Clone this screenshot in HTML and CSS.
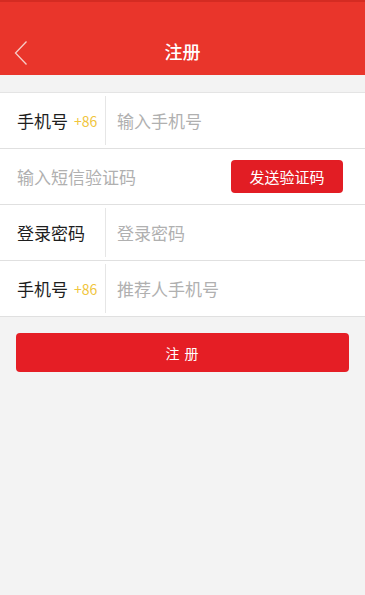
FILE: index.html
```html
<!DOCTYPE html>
<html lang="zh-CN">
<head>
<meta charset="utf-8">
<title>注册</title>
<link rel="stylesheet" href="styles.css">
</head>
<body>
<div class="page">
  <header class="topbar">
    <div class="back">
      <svg width="14" height="26" viewBox="0 0 14 26"><path d="M12.5 1.5 L1.5 13 L12.5 24.5" fill="none" stroke="#f7cdc8" stroke-width="1.3"/></svg>
    </div>
    <h1 class="title">注册</h1>
  </header>
  <div class="form">
    <div class="row">
      <div class="label">手机号<span class="code">+86</span></div>
      <div class="input">输入手机号</div>
    </div>
    <div class="row sms">
      <div class="input">输入短信验证码</div>
      <button class="send">发送验证码</button>
    </div>
    <div class="row">
      <div class="label">登录密码</div>
      <div class="input">登录密码</div>
    </div>
    <div class="row">
      <div class="label">手机号<span class="code">+86</span></div>
      <div class="input">推荐人手机号</div>
    </div>
  </div>
  <div class="actions">
    <button class="submit">注 册</button>
  </div>
</div>
</body>
</html>
```
FILE: styles.css
```css
* { box-sizing: border-box; }
html, body { margin: 0; padding: 0; }
body {
  background: #f3f3f3;
  font-family: "Noto Sans CJK SC", "Noto Sans", sans-serif;
  width: 365px;
  height: 595px;
  overflow: hidden;
}
.topbar {
  height: 75px;
  background: #e9352b;
  border-top: 2px solid #d42b22;
  display: flex;
  align-items: center;
  justify-content: center;
  position: relative;
  padding-top: 24px;
}
.back {
  position: absolute;
  left: 14px;
  top: 38px;
  width: 14px;
  height: 26px;
}
.back svg { display: block; }
.title {
  margin: 0;
  color: #fff;
  font-size: 18px;
  font-weight: 500;
  line-height: 24px;
}
.form {
  margin-top: 17px;
  background: #fff;
  border-top: 1px solid #e4e4e4;
}
.row {
  height: 56px;
  display: flex;
  align-items: center;
  border-bottom: 1px solid #e0e0e0;
}
.label {
  width: 106px;
  padding-left: 17px;
  font-size: 17px;
  color: #1e1e1e;
  align-self: stretch;
  display: flex;
  align-items: center;
  border-right: 1px solid #e6e6e6;
  margin: 3px 0;
  white-space: nowrap;
}
.code {
  color: #f0c53c;
  font-size: 14px;
  margin-left: 6px;
}
.input {
  padding-left: 11px;
  font-size: 17px;
  color: #b0b0b0;
  flex: 1;
}
.sms .input { padding-left: 17px; }
.send {
  width: 112px;
  height: 33px;
  margin-right: 22px;
  background: #e21d24;
  color: #fff;
  border: none;
  border-radius: 4px;
  font-family: inherit;
  font-size: 15px;
  padding: 0;
}
.actions {
  padding: 16px 16px 0 16px;
}
.submit {
  width: 333px;
  height: 39px;
  background: #e51e25;
  color: #fff;
  border: none;
  border-radius: 4px;
  font-family: inherit;
  font-size: 14px;
  letter-spacing: 1px;
  padding: 0;
  display: block;
}
```
